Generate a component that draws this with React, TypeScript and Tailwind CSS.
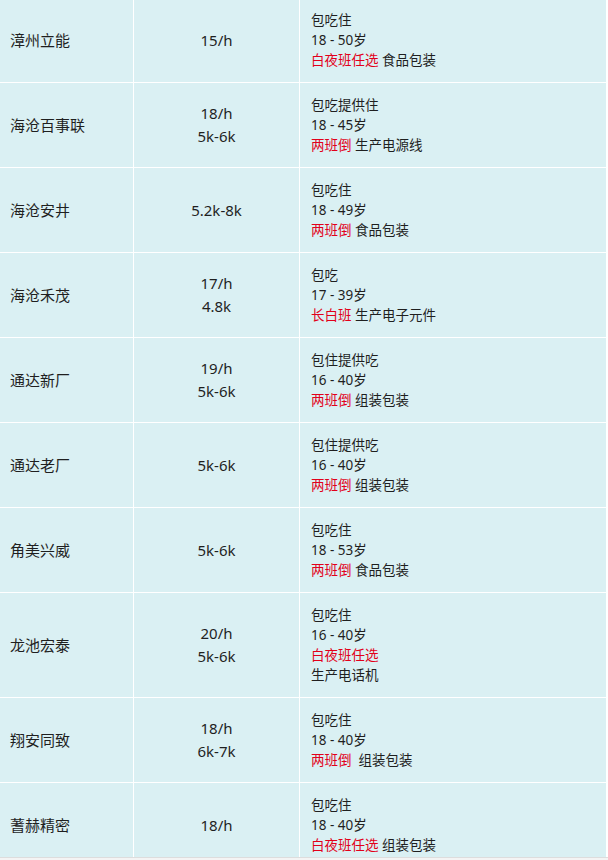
import React from 'react';

type Row = {
  name: string;
  pay: string[];
  board: string;
  age: string;
  shift: string;
  job: string;
  sep?: string;
  wrap?: boolean;
};

const ROWS: Row[] = [
  { name: '漳州立能', pay: ['15/h'], board: '包吃住', age: '18 - 50岁', shift: '白夜班任选', job: '食品包装' },
  { name: '海沧百事联', pay: ['18/h', '5k-6k'], board: '包吃提供住', age: '18 - 45岁', shift: '两班倒', job: '生产电源线' },
  { name: '海沧安井', pay: ['5.2k-8k'], board: '包吃住', age: '18 - 49岁', shift: '两班倒', job: '食品包装' },
  { name: '海沧禾茂', pay: ['17/h', '4.8k'], board: '包吃', age: '17 - 39岁', shift: '长白班', job: '生产电子元件' },
  { name: '通达新厂', pay: ['19/h', '5k-6k'], board: '包住提供吃', age: '16 - 40岁', shift: '两班倒', job: '组装包装' },
  { name: '通达老厂', pay: ['5k-6k'], board: '包住提供吃', age: '16 - 40岁', shift: '两班倒', job: '组装包装' },
  { name: '角美兴威', pay: ['5k-6k'], board: '包吃住', age: '18 - 53岁', shift: '两班倒', job: '食品包装' },
  { name: '龙池宏泰', pay: ['20/h', '5k-6k'], board: '包吃住', age: '16 - 40岁', shift: '白夜班任选', job: '生产电话机', wrap: true },
  { name: '翔安同致', pay: ['18/h', '6k-7k'], board: '包吃住', age: '18 - 40岁', shift: '两班倒', job: '组装包装', sep: '\u00a0\u00a0' },
  { name: '蓍赫精密', pay: ['18/h'], board: '包吃住', age: '18 - 40岁', shift: '白夜班任选', job: '组装包装' },
];

const font = { fontFamily: '"Noto Sans", "Noto Sans CJK SC", sans-serif' };

export default function App() {
  return (
    <div className="relative h-[860px] overflow-hidden bg-white text-[#1f1f1f]" style={font}>
      <div className="-mt-[2px] flex w-[606px] flex-col gap-px bg-white">
        {ROWS.map((r) => (
          <div key={r.name} className="grid grid-cols-[133px_165px_1fr] gap-px">
            <div className="flex items-center bg-[#daf0f3] pl-[10px] text-[15px]">{r.name}</div>
            <div className="flex flex-col items-center justify-center bg-[#daf0f3] text-[15px] leading-[23px]">
              {r.pay.map((p) => (
                <span key={p}>{p}</span>
              ))}
            </div>
            <div className="bg-[#daf0f3] py-[12px] pl-[11px] text-[13.5px] leading-[20px]">
              <div>{r.board}</div>
              <div>{r.age}</div>
              {r.wrap ? (
                <>
                  <div className="text-[#e2001a]">{r.shift}</div>
                  <div>{r.job}</div>
                </>
              ) : (
                <div>
                  <span className="text-[#e2001a]">{r.shift}</span>
                  {r.sep ?? ' '}
                  {r.job}
                </div>
              )}
            </div>
          </div>
        ))}
      </div>
      <div className="absolute bottom-0 left-0 h-[3px] w-full border-t border-[#dddddd] bg-[#f4f4f4]" />
    </div>
  );
}
